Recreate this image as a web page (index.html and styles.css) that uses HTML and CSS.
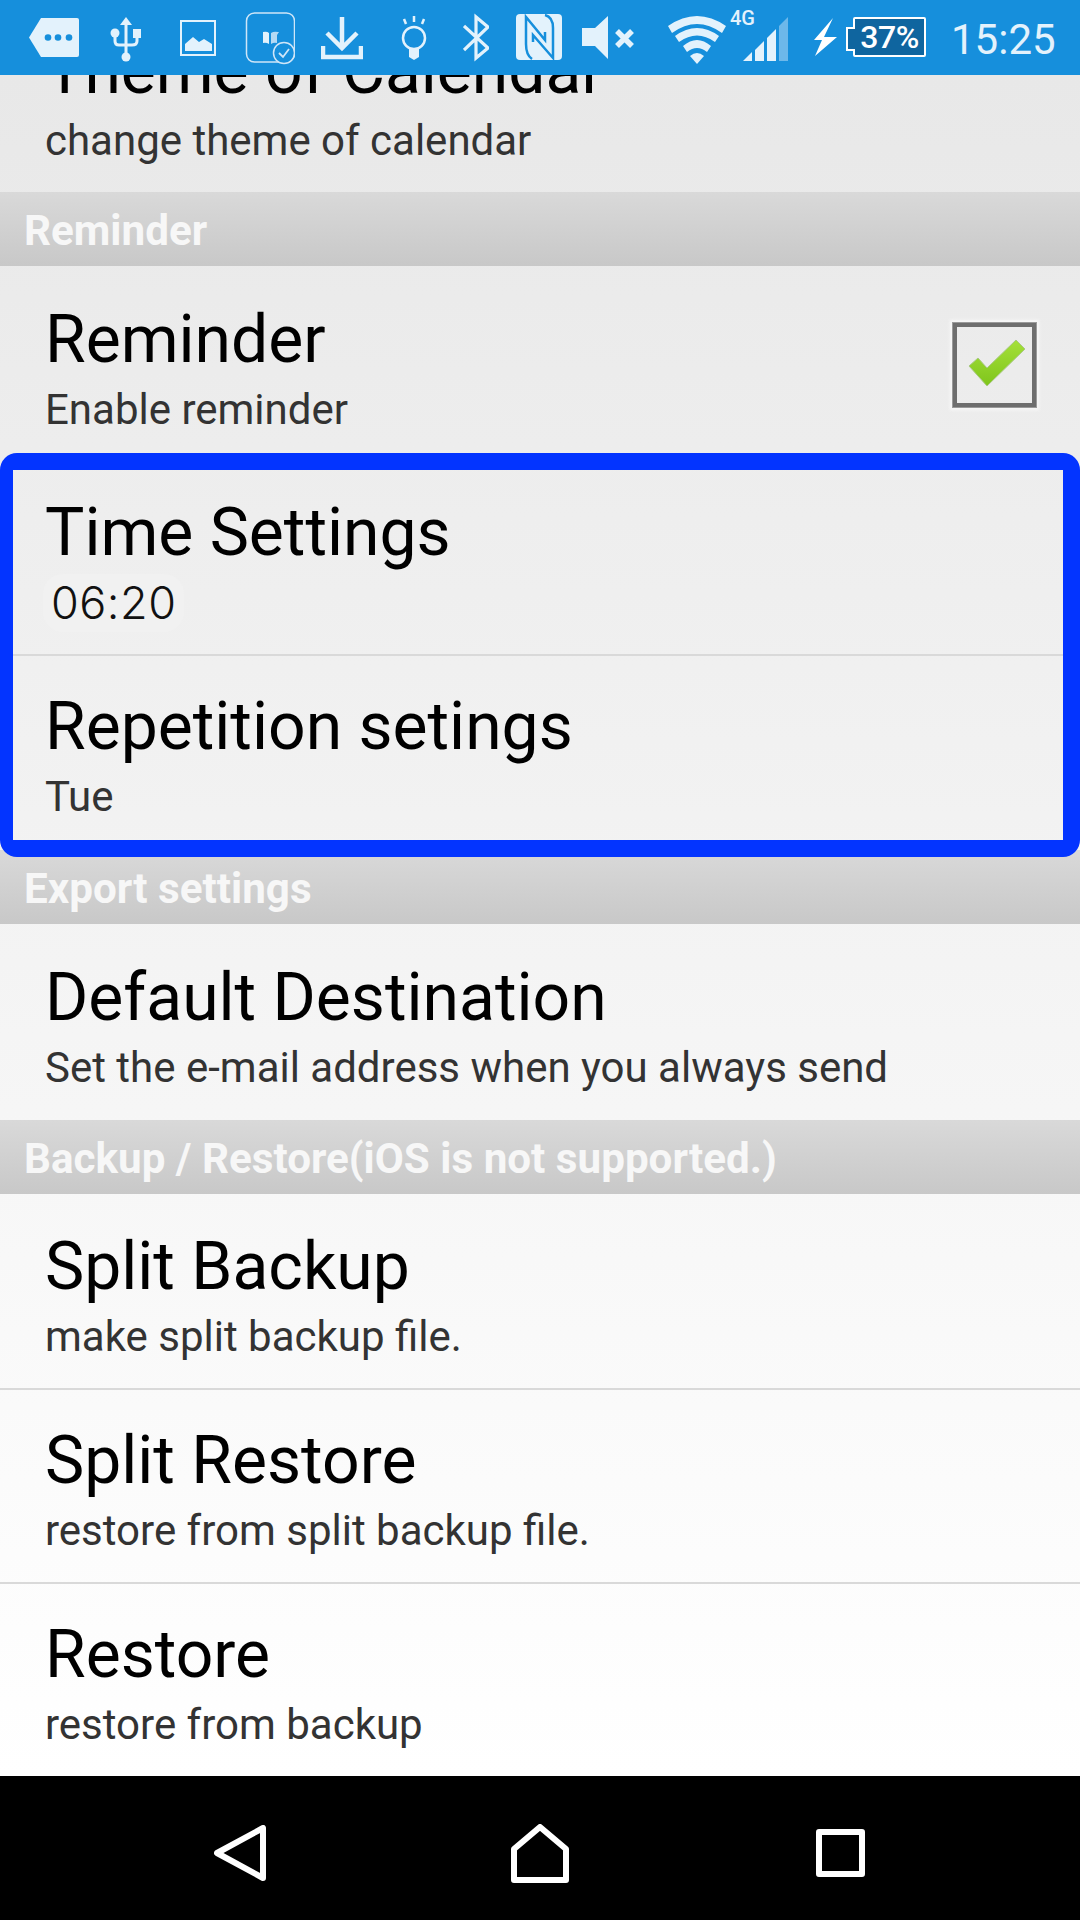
FILE: index.html
```html
<!DOCTYPE html>
<html lang="en">
<head>
<meta charset="utf-8">
<title>Settings</title>
<link rel="stylesheet" href="styles.css">
</head>
<body>
<div class="screen">
  <header class="status">
    <svg class="ic i-tag" width="50" height="75" viewBox="0 0 50 75"><path d="M12 18H48a2 2 0 0 1 2 2V55a2 2 0 0 1-2 2H12L0 37.500Z" class="fill"/><circle cx="19" cy="37.500" r="3.300" class="cut"/><circle cx="29" cy="37.500" r="3.300" class="cut"/><circle cx="40" cy="37.500" r="3.300" class="cut"/></svg>
    <svg class="ic i-usb" width="31" height="75" viewBox="0 0 31 75"><path d="M16 17l6 8h-4.500V54h-3V25H10Z" class="fill"/><circle cx="16" cy="57" r="4.500" class="fill"/><circle cx="5" cy="33" r="4.500" class="fill"/><rect x="23" y="29" width="8" height="9" class="fill"/><path d="M5 35v6q0 4 4 4h13q5 0 5-4v-5" class="line" stroke-width="3"/></svg>
    <svg class="ic i-img" width="36" height="75" viewBox="0 0 36 75"><rect x="1" y="21" width="34" height="34" class="line" stroke-width="2"/><path d="M5 51V44l8-7 6 5 5-3 8 5v7Z" class="fill"/></svg>
    <svg class="ic i-book" width="50" height="75" viewBox="0 0 50 75"><rect x="1.500" y="13" width="48" height="49" rx="8" class="line thin" stroke-width="1.500"/><path d="M18 32q4-1 6 1v11q-3-2-6-1Z" class="fill"/><path d="M26 33q3-2 7-1l1 0-2 3v8q-3-1-6 1Z" class="fill soft"/><circle cx="39" cy="53" r="10.500" class="cutline" stroke-width="1.500"/><path d="M34 53l4 4 6-8" class="line thin" stroke-width="1.800"/></svg>
    <svg class="ic i-dl" width="42" height="75" viewBox="0 0 42 75"><path d="M21 17V48M6 33l15 15 15-15" class="line" stroke-width="4.500"/><path d="M2 46V57H40V46" class="line" stroke-width="4.500"/></svg>
    <svg class="ic i-bulb" width="26" height="75" viewBox="0 0 26 75"><circle cx="13" cy="38" r="11" class="line" stroke-width="2.500"/><path d="M8 48h10v9l-5 3-5-3Z" class="fill"/><path d="M13 16v6M3 19l2 5M23 19l-2 5" class="line" stroke-width="2.500"/></svg>
    <svg class="ic i-bt" width="26" height="75" viewBox="0 0 26 75"><path d="M1 26L25 48 13 58V17L25 27 1 50" class="line" stroke-width="3.200"/></svg>
    <svg class="ic i-nfc" width="46" height="75" viewBox="0 0 46 75"><rect x="0" y="14" width="46" height="46" rx="4" class="fill"/><path d="M16 59Q10 55 10 44V17L29 40V32" class="nfc"/><path d="M29 15Q37 17 37 28V58L17 35V42" class="nfc"/></svg>
    <svg class="ic i-mute" width="53" height="75" viewBox="0 0 53 75"><path d="M0 28H13L26 16V59L13 46H0Z" class="fill"/><path d="M35 31L50 46M50 31L35 46" class="line" stroke-width="5.500"/></svg>
    <svg class="ic i-wifi" width="58" height="75" viewBox="0 0 58 75"><path d="M0 26Q29 6 58 26L54 33Q29 15 4 33Z" class="fill"/><path d="M7 36Q29 20 51 36L47 42Q29 29 11 42Z" class="fill"/><path d="M15 46Q29 34 43 46L39 52Q29 44 19 52Z" class="fill"/><path d="M22 56Q29 50 36 56L29 64Z" class="fill"/></svg>
    <div class="net">
      <span class="gen">4G</span>
      <svg class="signal" width="45" height="75" viewBox="0 0 45 75"><path d="M0 61L9 52V61Z" class="fill"/><path d="M12 50L21 41V61H12Z" class="fill"/><path d="M24 38L33 29V61H24Z" class="fill"/><path d="M36 26L45 17V61H36Z" class="fill dim"/></svg>
    </div>
    <svg class="ic i-bolt" width="23" height="75" viewBox="0 0 23 75"><path d="M19 18L10 37H23L1 56 8 40H0Z" class="white"/></svg>
    <div class="batt"><span class="pct">37%</span></div>
    <span class="clock">15:25</span>
  </header>

  <main class="list">
    <div class="row first">
      <div class="title">Theme of Calendar</div>
      <div class="sub">change theme of calendar</div>
    </div>
    <div class="section">Reminder</div>
    <div class="row toggle last">
      <div>
        <div class="title">Reminder</div>
        <div class="sub">Enable reminder</div>
      </div>
      <div class="check">
        <svg width="75" height="76" viewBox="0 0 75 76">
          <defs><linearGradient id="g" x1="0" y1="0" x2="0" y2="1"><stop offset="0" stop-color="#a5e03a"/><stop offset="1" stop-color="#7fc51c"/></linearGradient></defs>
          <path d="M12 39L21 31 30 41 59 13 68 22 30 59Z" fill="url(#g)" stroke="#a9c983" stroke-width="1"/>
        </svg>
      </div>
    </div>
    <div class="picked">
      <div class="row mid raise-2">
        <div class="title">Time Settings</div>
        <div class="sub time"><span class="retouch">06:20</span></div>
      </div>
      <div class="row last raise-3">
        <div class="title">Repetition setings</div>
        <div class="sub">Tue</div>
      </div>
      <div class="frame"></div>
    </div>
    <div class="section">Export settings</div>
    <div class="row last tall">
      <div class="title">Default Destination</div>
      <div class="sub">Set the e-mail address when you always send</div>
    </div>
    <div class="section">Backup / Restore(iOS is not supported.)</div>
    <div class="row tall raise-1">
      <div class="title">Split Backup</div>
      <div class="sub">make split backup file.</div>
    </div>
    <div class="row raise-3">
      <div class="title">Split Restore</div>
      <div class="sub">restore from split backup file.</div>
    </div>
    <div class="row last end raise-3">
      <div class="title">Restore</div>
      <div class="sub">restore from backup</div>
    </div>
  </main>

  <nav class="nav">
    <svg width="52" height="56" viewBox="0 0 52 56"><path d="M49 3V53L3 28Z" class="nav-line"/></svg>
    <svg width="58" height="59" viewBox="0 0 58 59"><path d="M3 56V25L29 3 55 25V56Z" class="nav-line"/></svg>
    <svg width="49" height="48" viewBox="0 0 49 48"><rect x="3" y="3" width="43" height="42" class="nav-line"/></svg>
  </nav>
</div>
</body>
</html>
```
FILE: styles.css
```css
* { box-sizing: border-box; }
html, body { margin: 0; padding: 0; }
body { width: 1080px; height: 1920px; overflow: hidden; font-family: Roboto, "Noto Sans", sans-serif; }
.screen { width: 1080px; height: 1920px; display: flex; flex-direction: column; }

/* status bar */
.status { height: 75px; flex: none; background: #168fdc; display: flex; align-items: flex-start; padding-left: 29px; position: relative; z-index: 2; color: #e3f2fc; }
.ic { display: block; flex: none; }
.fill { fill: #e3f2fc; }
.fill.soft { fill: #b5daf4; }
.fill.dim { fill: #6db8ea; }
.white { fill: #fff; }
.cut { fill: #168fdc; }
.nfc { fill: none; stroke: #168fdc; stroke-width: 2.500; }
.line { fill: none; stroke: #e3f2fc; }
.line.thin { stroke: #cfe6f8; }
.cutline { fill: #168fdc; stroke: #cfe6f8; }
.i-usb { margin-left: 31px; }
.i-img { margin-left: 39px; }
.i-book { margin-left: 29px; }
.i-dl { margin-left: 26px; }
.i-bulb { margin-left: 38px; }
.i-bt { margin-left: 36px; }
.i-nfc { margin-left: 27px; }
.i-mute { margin-left: 20px; }
.i-wifi { margin-left: 33px; }
.net { position: relative; margin-left: 17px; width: 45px; height: 75px; flex: none; }
.signal { display: block; }
.gen { position: absolute; left: -13px; top: 6px; font-size: 20px; font-weight: 500; line-height: 24px; color: #e3f2fc; }
.i-bolt { margin-left: 26px; }
.batt { margin-left: 16px; margin-top: 17px; width: 73px; height: 40px; flex: none; position: relative; background: #0f659f; border: 2px solid #fff; border-radius: 2px; display: flex; align-items: center; justify-content: center; }
.batt::before { content: ""; position: absolute; left: -9px; top: 8px; width: 7px; height: 20px; border: 2px solid #fff; border-right: 0; background: #0f659f; }
.pct { font-size: 32px; line-height: 1; color: #fff; font-weight: 500; letter-spacing: -0.500px; }
.clock { margin-left: 25px; font-size: 42px; line-height: 79px; color: #e3f2fc; }

/* list */
.list { flex: 1; min-height: 0; overflow: hidden; background: linear-gradient(#e8e8e8, #ffffff); }
.row { height: 194px; padding: 32px 0 0 45px; border-bottom: 2px solid #d9d9d9; }
.row.first { height: 195px; margin-top: -78px; border-bottom: 0; }
.row.last { border-bottom: 0; }
.row.mid { height: 195px; }
.row.tall { height: 196px; }
.row.end { height: 192px; }
.row.raise-1 { padding-top: 31px; }
.row.raise-2 { padding-top: 30px; }
.row.raise-3 { padding-top: 29px; }
.row.toggle { height: 195px; display: flex; justify-content: space-between; padding-right: 44px; }
.title { font-size: 66px; line-height: 83px; color: #000; white-space: nowrap; }
.sub { font-size: 42px; line-height: 58px; color: #333; white-space: nowrap; }
.sub.time { font-family: Inter, "Liberation Sans", sans-serif; font-weight: 300; color: #111; font-size: 45px; letter-spacing: 0.500px; }
.retouch { display: inline-block; margin-left: -2px; padding: 0 8px; background: #f1f1f1; border-radius: 20px; }
.section { height: 74px; padding-left: 24px; background: linear-gradient(#d9d9d9, #c8c8c8); color: #f7f7f7; font-size: 42.200px; font-weight: 700; line-height: 77px; white-space: nowrap; }
.check { width: 83px; height: 84px; margin-top: 25px; border: 4px solid #6e6e6e; box-shadow: 0 0 0 1px #9a9a9a, 0 0 3px 3px #f8f8f8; }
.check svg { display: block; }
.picked { position: relative; }
.frame { position: absolute; left: 0; right: 0; top: -8px; bottom: -7px; border: 17px solid #0334ff; border-left-width: 13px; border-radius: 17px; }

/* navigation bar */
.nav { height: 144px; flex: none; background: #000; padding-top: 10px; display: grid; grid-template-columns: repeat(3, 300px); justify-content: center; justify-items: center; align-items: center; }
.nav-line { fill: none; stroke: #fff; stroke-width: 6; stroke-linejoin: round; }
```
